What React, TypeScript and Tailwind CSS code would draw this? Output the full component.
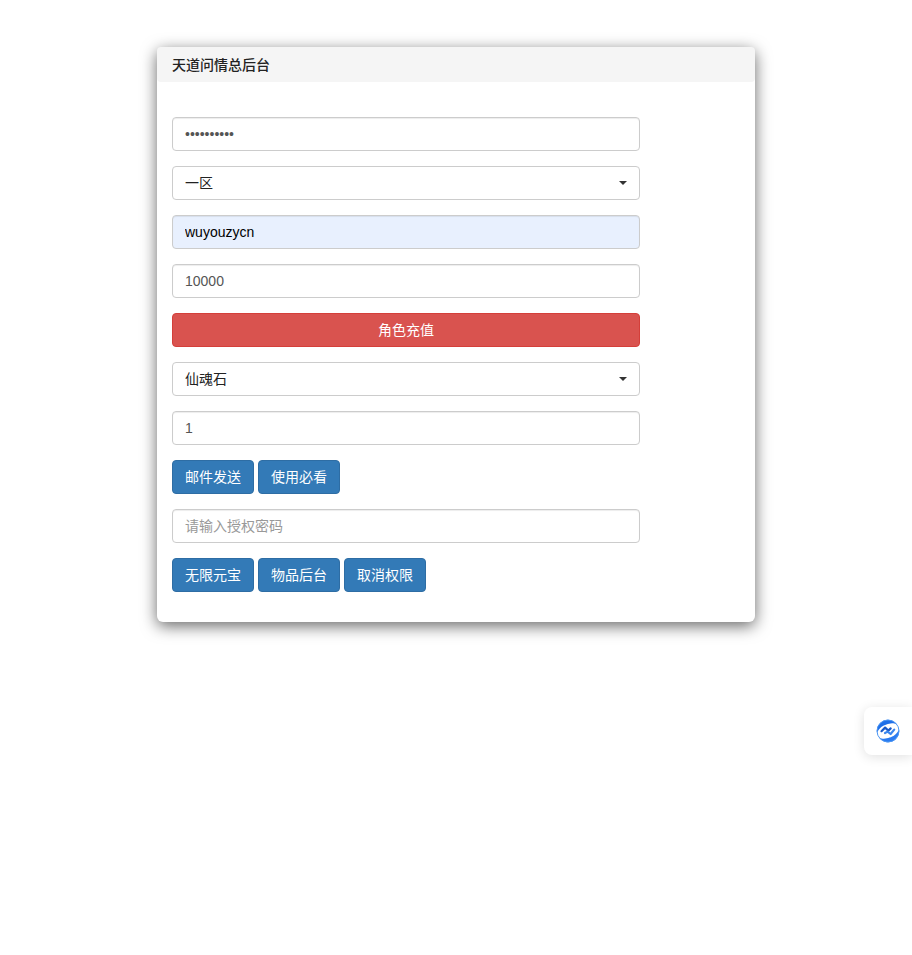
import React from "react";

const fieldClass =
  "block h-[34px] w-full rounded-[4px] border border-[#ccc] bg-white px-3 py-[6px] text-sm text-[#555] shadow-[inset_0_1px_1px_rgba(0,0,0,0.075)] outline-none placeholder:text-[#999]";
const blueBtn =
  "h-[34px] rounded-[4px] border border-[#2e6da4] bg-[#337ab7] px-3 text-sm text-white";

function SelectField({ value }: { value: string }) {
  return (
    <div className="relative">
      <select
        className="block h-[34px] w-full appearance-none rounded-[4px] border border-[#ccc] bg-white px-3 py-[6px] text-sm text-[#222] outline-none"
        defaultValue={value}
      >
        <option>{value}</option>
      </select>
      <svg className="pointer-events-none absolute top-[15px] right-[13px]" width="8" height="4" viewBox="0 0 8 4">
        <path d="M0 0h8L4 4z" fill="#333" />
      </svg>
    </div>
  );
}

function FloatLogo() {
  return (
    <svg width="24" height="24" viewBox="0 0 24 24" fill="none">
      <path d="M1 13.5A11 11 0 0 1 21 5.6C16.5 3 13.5 4.6 10.5 5.4 6.8 6.4 3.4 8.6 1 13.5z" fill="#1f6fe8" />
      <path d="M23 10.5A11 11 0 0 1 3 18.4c4.5 2.6 7.5 1 10.5.2 3.7-1 7.1-3.2 9.5-8.1z" fill="#2a7bf0" />
      <circle cx="12" cy="12" r="11" stroke="#4d97f3" strokeWidth="1" />
      <path d="M5.5 12.2l3.6-3.6 3.2 3 2.4-2.2" stroke="#1a5ac8" strokeWidth="2.2" strokeLinecap="round" strokeLinejoin="round" />
      <path d="M9 14l2.6-1.4 3 2.4 3.6-4.4" stroke="#3a86ee" strokeWidth="2.2" strokeLinecap="round" strokeLinejoin="round" />
    </svg>
  );
}

export default function App() {
  return (
    <div className="relative h-[955px] overflow-hidden bg-white pt-[47px] font-['Liberation_Sans','Noto_Sans_CJK_SC',sans-serif] text-sm text-[#333]">
      {/* PANEL */}
      <div className="mx-auto w-[598px] rounded-[6px] bg-white shadow-[0_4px_16px_rgba(0,0,0,0.6)]">
        <div className="flex h-[35px] items-center rounded-[4px] bg-[#f5f5f5] px-[15px] font-medium text-[#222]">
          天道问情总后台
        </div>

        <div className="flex w-[498px] flex-col gap-[15px] px-[15px] pt-[35px] pb-[30px]">
          <input className={fieldClass} type="password" defaultValue="wuyouzycn1" readOnly />

          <SelectField value="一区" />

          <input
            className="block h-[34px] w-full rounded-[4px] border border-[#ccc] bg-[#e8f0fe] px-3 py-[6px] text-sm text-black shadow-[inset_0_1px_1px_rgba(0,0,0,0.075)] outline-none"
            defaultValue="wuyouzycn"
            readOnly
          />
          <input className={fieldClass} defaultValue="10000" readOnly />

          <button className="h-[34px] w-full rounded-[4px] border border-[#d43f3a] bg-[#d9534f] text-sm text-white">
            角色充值
          </button>

          <SelectField value="仙魂石" />

          <input className={fieldClass} defaultValue="1" readOnly />

          <div className="flex gap-1">
            <button className={blueBtn}>邮件发送</button>
            <button className={blueBtn}>使用必看</button>
          </div>

          <input className={fieldClass} placeholder="请输入授权密码" />

          <div className="flex gap-1">
            <button className={blueBtn}>无限元宝</button>
            <button className={blueBtn}>物品后台</button>
            <button className={blueBtn}>取消权限</button>
          </div>
        </div>
      </div>

      {/* FLOATING WIDGET */}
      <div className="absolute top-[707px] right-0 flex h-12 w-12 items-center justify-center rounded-l-lg bg-white shadow-[0_2px_12px_rgba(0,0,0,0.12)]">
        <FloatLogo />
      </div>
    </div>
  );
}
